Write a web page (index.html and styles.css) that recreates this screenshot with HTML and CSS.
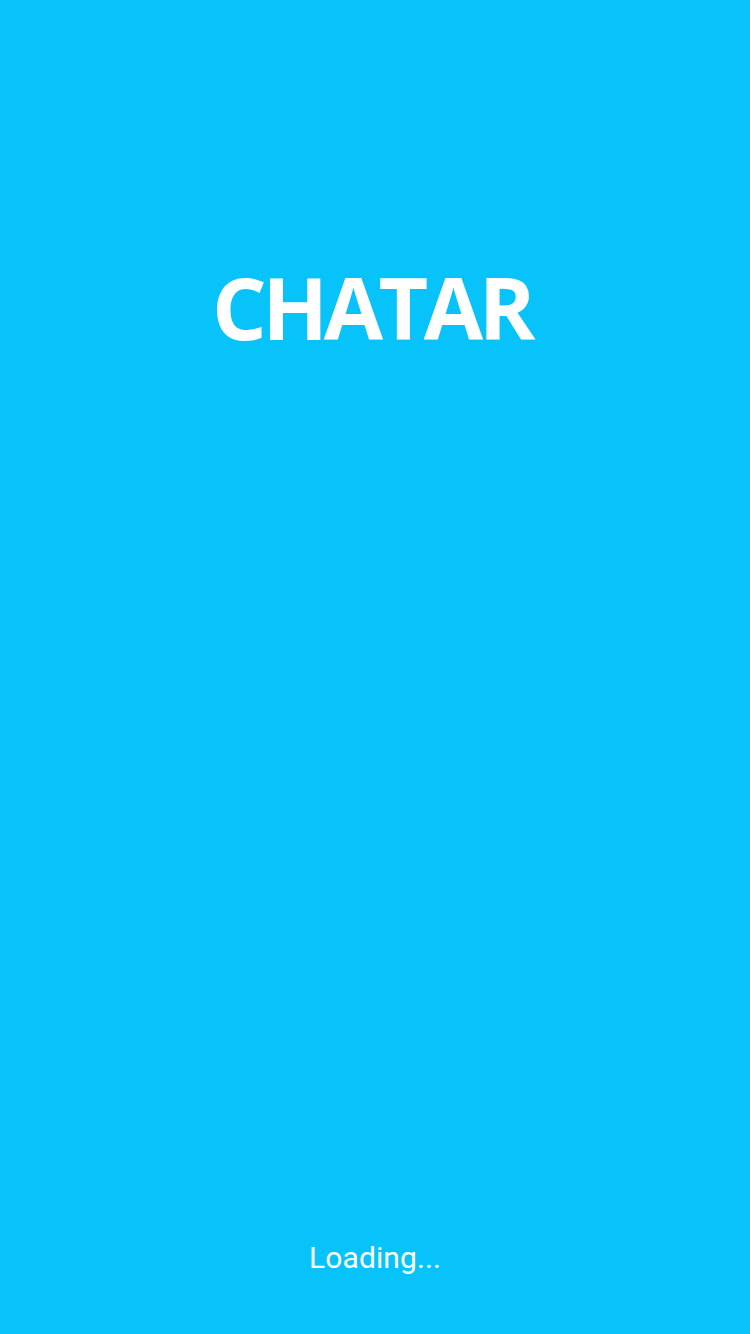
FILE: index.html
```html
<!DOCTYPE html>
<html>
<head>
<meta charset="utf-8">
<link rel="stylesheet" href="styles.css">
</head>
<body>
<div class="screen">
  <h1 class="title">CHATAR</h1>
  <div class="spacer"></div>
  <p class="loading">Loading...</p>
</div>
</body>
</html>
```
FILE: styles.css
```css
html, body { margin: 0; padding: 0; }
body { background: #07c3f9; }
.screen {
  width: 750px;
  height: 1334px;
  display: flex;
  flex-direction: column;
  align-items: center;
  background: #07c3f9;
  color: #fff;
}
.title {
  margin: 257px 0 0;
  padding-right: 7px;
  font-family: "Open Sans", sans-serif;
  font-weight: 700;
  font-size: 86px;
  line-height: 100px;
  letter-spacing: -4.5px;
}
.spacer { flex: 1; }
.loading {
  margin: 0 0 56px;
  font-family: Roboto, sans-serif;
  font-weight: 400;
  font-size: 30px;
  line-height: 40px;
  letter-spacing: 0.1px;
}
```
